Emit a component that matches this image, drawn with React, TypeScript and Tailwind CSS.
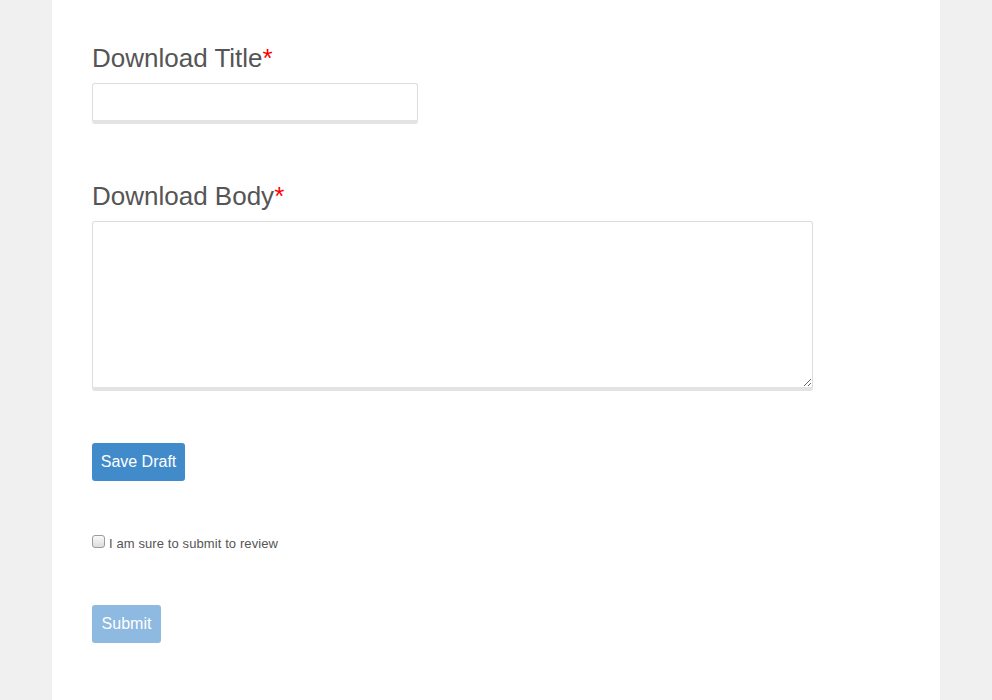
export default function App() {
  return (
    <div className="min-h-screen bg-[#f0f0f0] font-['Liberation_Sans',Arial,sans-serif]">
      <div className="mx-auto min-h-screen w-[888px] bg-white px-10 pt-[44px] pb-10">
        <form className="flex flex-col items-start">
          <label className="text-[26px] leading-[29px] text-[#555555]">
            Download Title<span className="text-[#ff0000]">*</span>
          </label>
          <input
            type="text"
            className="mt-[10px] h-[41px] w-[326px] rounded-[3px] border border-b-4 border-[#dddddd] border-b-[#e3e3e3] px-2 text-base outline-none"
          />

          <label className="mt-[58px] text-[26px] leading-[29px] text-[#555555]">
            Download Body<span className="text-[#ff0000]">*</span>
          </label>
          <textarea className="mt-[10px] h-[170px] w-[721px] rounded-[3px] border border-b-4 border-[#dddddd] border-b-[#e3e3e3] p-2 text-base outline-none" />

          <button
            type="button"
            className="mt-[52px] h-[38px] w-[93px] rounded-[3px] bg-[#428bca] text-base text-white"
          >
            Save Draft
          </button>

          <label className="mt-[53px] flex items-start text-[13px] leading-[16px] tracking-[0.1px] text-[#555555]">
            <input
              type="checkbox"
              className="m-0 mt-px mr-[4px] h-[13px] w-[13px] appearance-none rounded-[3px] border border-[#9c9c9c] bg-gradient-to-b from-[#fafafa] to-[#dcdcdc]"
            />
            <span className="pt-[2px]">I am sure to submit to review</span>
          </label>

          <button
            type="button"
            disabled
            className="mt-[53px] h-[38px] w-[69px] rounded-[3px] bg-[#8eb9e0] text-base text-white"
          >
            Submit
          </button>
        </form>
      </div>
    </div>
  )
}
